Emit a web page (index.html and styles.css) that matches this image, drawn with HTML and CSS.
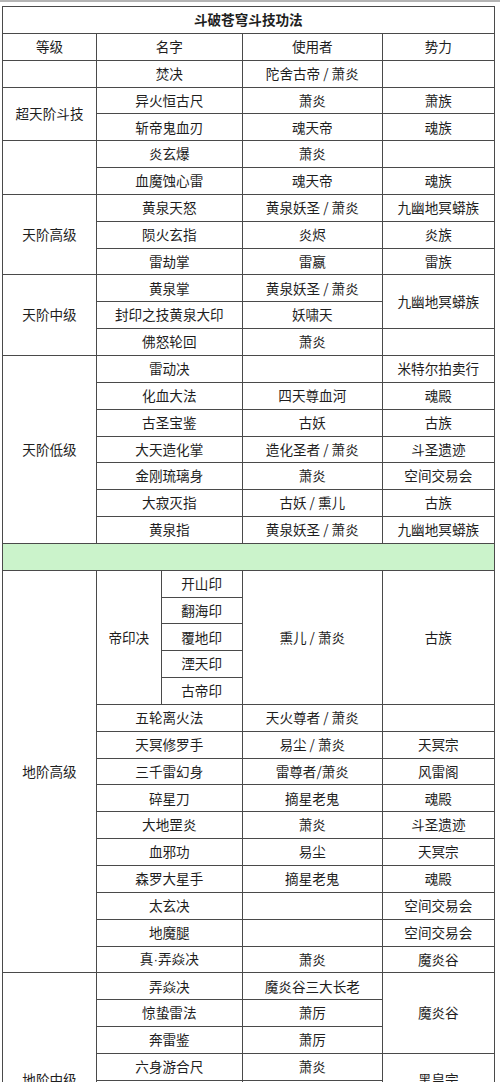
FILE: index.html
```html
<!DOCTYPE html>
<html lang="zh-CN">
<head>
<meta charset="utf-8">
<title>斗破苍穹斗技功法</title>
<link rel="stylesheet" href="styles.css">
</head>
<body>
<div class="topbar"></div>
<table class="sheet">
  <colgroup>
    <col class="c-a"><col class="c-b"><col class="c-c"><col class="c-d"><col class="c-e">
  </colgroup>
  <tbody>
    <tr><td colspan="5" class="title">斗破苍穹斗技功法</td></tr>
    <tr><td>等级</td><td colspan="2">名字</td><td>使用者</td><td>势力</td></tr>

    <tr><td></td><td colspan="2">焚决</td><td>陀舍古帝 / 萧炎</td><td></td></tr>
    <tr><td rowspan="2">超天阶斗技</td><td colspan="2">异火恒古尺</td><td>萧炎</td><td>萧族</td></tr>
    <tr><td colspan="2">斩帝鬼血刃</td><td>魂天帝</td><td>魂族</td></tr>
    <tr><td rowspan="2"></td><td colspan="2">炎玄爆</td><td>萧炎</td><td></td></tr>
    <tr><td colspan="2">血魔蚀心雷</td><td>魂天帝</td><td>魂族</td></tr>

    <tr><td rowspan="3">天阶高级</td><td colspan="2">黄泉天怒</td><td>黄泉妖圣 / 萧炎</td><td>九幽地冥蟒族</td></tr>
    <tr><td colspan="2">陨火玄指</td><td>炎烬</td><td>炎族</td></tr>
    <tr><td colspan="2">雷劫掌</td><td>雷嬴</td><td>雷族</td></tr>

    <tr><td rowspan="3">天阶中级</td><td colspan="2">黄泉掌</td><td>黄泉妖圣 / 萧炎</td><td rowspan="2">九幽地冥蟒族</td></tr>
    <tr><td colspan="2">封印之技黄泉大印</td><td>妖啸天</td></tr>
    <tr><td colspan="2">佛怒轮回</td><td>萧炎</td><td></td></tr>

    <tr><td rowspan="7">天阶低级</td><td colspan="2">雷动决</td><td></td><td>米特尔拍卖行</td></tr>
    <tr><td colspan="2">化血大法</td><td>四天尊血河</td><td>魂殿</td></tr>
    <tr><td colspan="2">古圣宝鉴</td><td>古妖</td><td>古族</td></tr>
    <tr><td colspan="2">大天造化掌</td><td>造化圣者 / 萧炎</td><td>斗圣遗迹</td></tr>
    <tr><td colspan="2">金刚琉璃身</td><td>萧炎</td><td>空间交易会</td></tr>
    <tr><td colspan="2">大寂灭指</td><td>古妖 / 熏儿</td><td>古族</td></tr>
    <tr><td colspan="2">黄泉指</td><td>黄泉妖圣 / 萧炎</td><td>九幽地冥蟒族</td></tr>

    <tr class="divider"><td colspan="5"></td></tr>

    <tr><td rowspan="15">地阶高级</td><td rowspan="5">帝印决</td><td class="sub">开山印</td><td rowspan="5">熏儿 / 萧炎</td><td rowspan="5">古族</td></tr>
    <tr><td class="sub">翻海印</td></tr>
    <tr><td class="sub light">覆地印</td></tr>
    <tr><td class="sub">湮天印</td></tr>
    <tr><td class="sub">古帝印</td></tr>
    <tr><td colspan="2">五轮离火法</td><td>天火尊者 / 萧炎</td><td></td></tr>
    <tr><td colspan="2">天冥修罗手</td><td>易尘 / 萧炎</td><td>天冥宗</td></tr>
    <tr><td colspan="2">三千雷幻身</td><td>雷尊者/萧炎</td><td>风雷阁</td></tr>
    <tr><td colspan="2">碎星刀</td><td>摘星老鬼</td><td>魂殿</td></tr>
    <tr><td colspan="2">大地罡炎</td><td>萧炎</td><td>斗圣遗迹</td></tr>
    <tr><td colspan="2">血邪功</td><td>易尘</td><td>天冥宗</td></tr>
    <tr><td colspan="2">森罗大星手</td><td>摘星老鬼</td><td>魂殿</td></tr>
    <tr><td colspan="2">太玄决</td><td></td><td>空间交易会</td></tr>
    <tr><td colspan="2">地魔腿</td><td></td><td>空间交易会</td></tr>
    <tr><td colspan="2">真<span class="dot">·</span>弄焱决</td><td>萧炎</td><td>魔炎谷</td></tr>

    <tr><td rowspan="8">地阶中级</td><td colspan="2">弄焱决</td><td>魔炎谷三大长老</td><td rowspan="3">魔炎谷</td></tr>
    <tr><td colspan="2">惊蛰雷法</td><td>萧厉</td></tr>
    <tr><td colspan="2">奔雷鉴</td><td>萧厉</td></tr>
    <tr><td colspan="2">六身游合尺</td><td>萧炎</td><td rowspan="2">黑皇宗</td></tr>
    <tr><td colspan="2"></td><td></td></tr>
    <tr><td colspan="2"></td><td></td><td></td></tr>
    <tr><td colspan="2"></td><td></td><td></td></tr>
    <tr><td colspan="2"></td><td></td><td></td></tr>
  </tbody>
</table>
</body>
</html>
```

FILE: styles.css
```css
html, body {
  margin: 0;
  padding: 0;
  overflow: hidden;
  background: #ffffff;
}

body {
  font-family: "Noto Sans CJK SC", "Noto Sans", sans-serif;
  color: #1e1e1e;
}

.topbar {
  height: 2px;
  background: #b4b4b4;
}

.sheet {
  margin: 4px 0 0 2px;
  width: 492px;
  border-collapse: collapse;
  table-layout: fixed;
  font-size: 13.6px;
  line-height: 1;
}

.c-a { width: 94px; }
.c-b { width: 64.6px; }
.c-c { width: 81px; }
.c-d { width: 140.4px; }
.c-e { width: 111.6px; }

.sheet tr {
  height: 26.85px;
}

.sheet td {
  border: 1px solid #4a4a4a;
  padding: 0;
  text-align: center;
  vertical-align: middle;
  white-space: nowrap;
  overflow: hidden;
}

.sheet td.title {
  font-weight: bold;
}

.sheet td.sub.light {
  border-top-color: #9a9a9a;
}

.sheet tr.divider td {
  background: #cbf3cb;
}

.dot {
  font-family: "Liberation Sans", sans-serif;
}
```
